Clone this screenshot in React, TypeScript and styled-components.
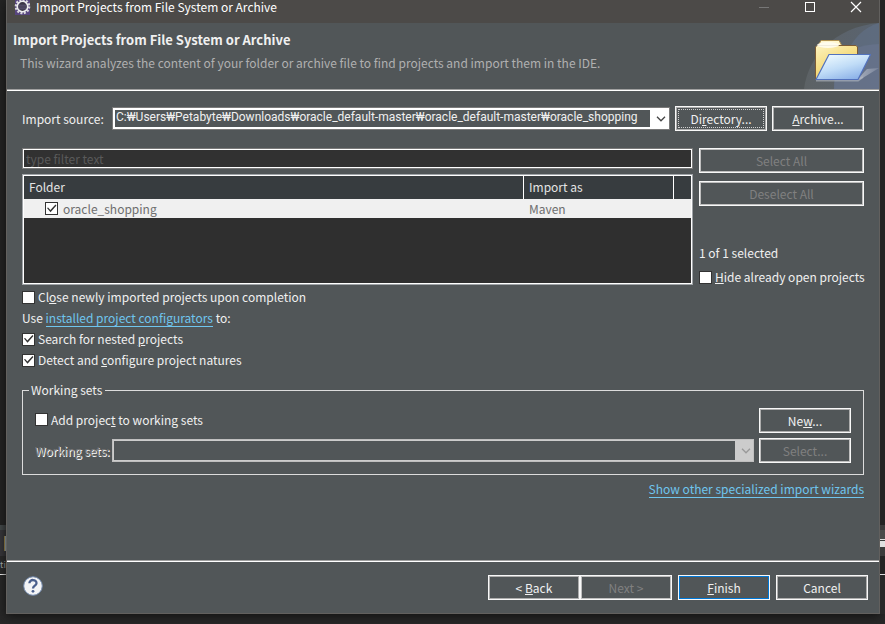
import React from "react";
import styled, { createGlobalStyle, css } from "styled-components";

const panel = "#515658";
const textColor = "#f0f0f0";
const disabledText = "#808080";

const Global = createGlobalStyle`
  *, *::before, *::after { box-sizing: border-box; }
  body {
    margin: 0;
    background: #282828;
    color: ${textColor};
    font: 400 12px/16px "Noto Sans CJK KR", "Noto Sans", sans-serif;
  }
  button, input, select { font: inherit; color: inherit; margin: 0; }
`;

const Desktop = styled.div`
  display: grid;
  grid-template-columns: 6px minmax(0, 1fr) 5px;
  min-height: 100vh;
  padding-bottom: 10px;
`;

const Strip = styled.div`
  display: flex;
  flex-direction: column;
  justify-content: flex-end;
  overflow: hidden;
  background: #242424;
`;

const Band = styled.div<{ $h: number; $bg: string }>`
  display: flex;
  flex: none;
  align-items: center;
  justify-content: flex-start;
  height: ${(p) => p.$h}px;
  background: ${(p) => p.$bg};
  color: #b8b8b8;
  font-size: 9px;
`;

const Chip = styled.span`
  width: 2px;
  height: 15px;
  margin-left: auto;
  background: #b5ccd4;
  border-left: 1px solid #b39a55;
`;

const Dialog = styled.section`
  display: flex;
  flex-direction: column;
  background: ${panel};
  border: solid #62605e;
  border-width: 0 1px 1px;
  box-shadow: 0 2px 10px #111;
`;

const TitleBar = styled.header`
  display: flex;
  align-items: center;
  height: 23px;
  padding: 0 15px 9px 7px;
  gap: 5px;
  background: #4c4a48;
`;

const WindowTitle = styled.span`
  flex: 1;
  color: #fff;
`;

const WindowButtons = styled.div`
  display: flex;
  gap: 30px;
`;

const WindowButton = styled.button`
  display: flex;
  width: 16px;
  height: 14px;
  padding: 0;
  border: 0;
  background: none;
`;

const Banner = styled.div`
  display: flex;
  justify-content: space-between;
  height: 68px;
  border-bottom: 1px solid #fff;
  box-shadow: inset 0 -1px #a0a0a0;
`;

const BannerText = styled.div`
  padding: 9px 0 0 6px;
`;

const Heading = styled.h1`
  margin: 0;
  font-size: 13px;
  line-height: 16px;
  font-weight: 700;
`;

const Description = styled.p`
  margin: 7px 0 0 7px;
  color: #b0b0b0;
`;

const Body = styled.main`
  flex: 1;
  padding: 15px 15px 0;
`;

const Button = styled.button<{ $kind?: "focus" | "primary" }>`
  width: 92px;
  height: 25px;
  padding: 0;
  border: 1px solid #f8f8f8;
  background: ${panel};
  box-shadow: inset 0 0 0 1px #adadad;
  &:disabled {
    color: ${disabledText};
    box-shadow: inset 0 0 0 1px #bfbfbf;
  }
  ${(p) =>
    p.$kind === "primary" &&
    css`
      box-shadow: inset 0 0 0 1px #0078d7;
    `}
  ${(p) =>
    p.$kind === "focus" &&
    css`
      outline: 1px dotted #d0d0d0;
      outline-offset: -4px;
    `}
`;

const WideButton = styled(Button)`
  width: 100%;
`;

const SourceRow = styled.div`
  display: grid;
  grid-template-columns: 85px minmax(0, 1fr) auto auto;
  column-gap: 5px;
  align-items: center;
`;

const Combo = styled.div<{ $off?: boolean }>`
  display: grid;
  grid-template-columns: minmax(0, 1fr) 12px;
  height: 23px;
  border: 1px solid ${(p) => (p.$off ? "#bfbfbf" : "#7a7a7a")};
  background: ${(p) => (p.$off ? "#ccc" : "#fff")};
  padding: ${(p) => (p.$off ? 1 : 2)}px;
  color: ${(p) => (p.$off ? "#999" : "#444")};
  svg {
    grid-area: 1 / 2;
    place-self: center;
    pointer-events: none;
  }
`;

const Select = styled.select`
  grid-area: 1 / 1 / 2 / 3;
  appearance: none;
  min-width: 0;
  border: 0;
  border-radius: 0;
  margin-right: 17px;
  padding: 0 0 2px 1px;
  background: ${panel};
  color: ${textColor};
  font-family: Roboto, "Noto Sans CJK KR", sans-serif;
  line-height: 15px;
  outline: none;
  opacity: 1;
`;

const Projects = styled.div`
  display: grid;
  grid-template-columns: minmax(0, 1fr) 165px;
  column-gap: 6px;
  margin-top: 17px;
`;

const ListColumn = styled.div`
  display: flex;
  flex-direction: column;
  gap: 5px;
`;

const Filter = styled.input`
  width: 100%;
  height: 21px;
  padding: 0 2px 1px 3px;
  border: 1px solid #7a7a7a;
  box-shadow: inset 0 0 0 1px #fff;
  background: #313131;
  outline: none;
  &::placeholder {
    color: #5a5a5a;
    opacity: 1;
  }
`;

const TableFrame = styled.div`
  height: 111px;
  border: 1px solid #a0a4a8;
  box-shadow: inset 0 0 0 1px #fff;
  padding: 1px;
  background: #2f2f2f;
`;

const Table = styled.table`
  width: 100%;
  table-layout: fixed;
  border-collapse: separate;
  border-spacing: 0;
`;

const Th = styled.th<{ $w?: number }>`
  width: ${(p) => (p.$w ? `${p.$w}px` : "auto")};
  height: 23px;
  padding: 0 5px 1px;
  text-align: left;
  font-weight: 400;
  color: #e4e4e4;
  background: #373c3f;
  border-right: 1px solid #fff;
  &:last-child {
    border-right: 0;
  }
`;

const Td = styled.td`
  height: 19px;
  padding: 0 5px;
  color: #6e6e6e;
  background: #f0f0f0;
`;

const Side = styled.div`
  display: flex;
  flex-direction: column;
  align-items: stretch;
  gap: 8px;
`;

const Status = styled.div`
  margin-top: 31px;
`;

const Check = styled.label<{ $indent?: number; $gap?: number }>`
  display: flex;
  align-items: center;
  gap: ${(p) => p.$gap || 3}px;
  padding-left: ${(p) => p.$indent || 0}px;
  white-space: nowrap;
`;

const Box = styled.input`
  appearance: none;
  flex: none;
  width: 13px;
  height: 13px;
  border: 1px solid #333;
  background: #fff;
  &:checked::before {
    content: "";
    display: block;
    width: 11px;
    height: 11px;
    background: #333;
    clip-path: polygon(9% 46%, 19% 40%, 40% 64%, 86% 14%, 95% 23%, 41% 83%);
  }
`;

const Options = styled.div`
  display: flex;
  flex-direction: column;
  gap: 5px;
  margin-top: 4px;
`;

const Link = styled.a`
  color: #6fc5ee;
  text-decoration: none;
  border-bottom: 1px solid #6fc5ee;
`;

const Group = styled.fieldset`
  margin: 14px 0 0;
  padding: 10px 12px 11px;
  border: 1px solid #dcdcdc;
  min-width: 0;
`;

const Legend = styled.legend`
  margin-left: -6px;
  padding: 0 3px 0 2px;
`;

const GroupGrid = styled.div`
  display: grid;
  grid-template-columns: 72px minmax(0, 1fr) auto;
  gap: 5px;
  align-items: center;
`;

const SpanTwo = styled.div`
  grid-column: span 2;
  padding-bottom: 2px;
`;

const EmbossedLabel = styled.label`
  color: #777;
  text-shadow: 1px 1px 0 #fff;
  white-space: nowrap;
`;

const MoreLink = styled.div`
  margin-top: 6px;
  text-align: right;
`;

const Footer = styled.footer`
  display: flex;
  align-items: flex-start;
  justify-content: space-between;
  height: 52px;
  padding: 13px 11px 0 16px;
  border-top: 1px solid #fff;
  box-shadow: 0 -1px #a0a0a0;
`;

const Actions = styled.div`
  display: flex;
  gap: 6px;
`;

const Pair = styled.div`
  display: flex;
`;

const HelpButton = styled.button`
  display: flex;
  padding: 1px 0 0;
  border: 0;
  background: none;
`;

function Chevron() {
  return (
    <svg width="10" height="6" viewBox="0 0 10 6" fill="none" stroke="currentColor" strokeWidth="1.3">
      <path d="M1 .8 5 4.8 9 .8" />
    </svg>
  );
}

function GearLogo() {
  return (
    <svg width="17" height="17" viewBox="0 0 17 17">
      <rect x="1" y="0" width="15" height="16" fill="#57457f" />
      <circle cx="8.5" cy="7.5" r="6.6" fill="none" stroke="#d8d6dc" strokeWidth="2.4" strokeDasharray="2 1.456" />
      <circle cx="8.5" cy="7.5" r="5.2" fill="#3b3546" stroke="#eeedf0" strokeWidth="1.6" />
      <path d="M4.5 6.2h8M4.2 8h8.6M4.8 9.8h7.4" stroke="#5c5475" />
    </svg>
  );
}

function FolderArt() {
  return (
    <svg width="76" height="67" viewBox="0 0 76 67">
      <defs>
        <linearGradient id="fade" x1="0" x2="1">
          <stop offset="0" stopColor="#6e7478" />
          <stop offset="1" stopColor="#667794" />
        </linearGradient>
        <linearGradient id="back" x1="0" y1="0" x2=".6" y2="1">
          <stop offset="0" stopColor="#fdf3c0" />
          <stop offset=".5" stopColor="#f6df88" />
          <stop offset="1" stopColor="#eccb5c" />
        </linearGradient>
        <linearGradient id="front" x1=".2" y1="0" x2=".8" y2="1">
          <stop offset="0" stopColor="#eefaff" />
          <stop offset=".5" stopColor="#c0dcf7" />
          <stop offset="1" stopColor="#86ade6" />
        </linearGradient>
        <linearGradient id="shade" x1="0" x2="1">
          <stop offset="0" stopColor="#d5d9e0" />
          <stop offset="1" stopColor="#8690a5" />
        </linearGradient>
      </defs>
      <path d="M1 66C5 34 31 4 76 0V66Z" fill="url(#fade)" opacity=".4" />
      <path d="M42 34C49 16 61 4 76 0V66H31C31 52 35 43 42 34Z" fill="#637590" opacity=".45" />
      <path d="M48 27C57 23 67 21 76 21V66H31C31 48 37 34 48 27Z" fill="#6b7894" opacity=".5" />
      <path d="M54 57 64 46 76 45 58 56Z" fill="url(#shade)" opacity=".6" />
      <path d="M13 57.500H55L60 54" fill="none" stroke="#b4bac4" strokeWidth="2" opacity=".6" />
      <path d="M15 23 18 17.500H36L39 23Z" fill="#fff7cf" stroke="#b29453" />
      <path d="M12.500 24 14 22.500H53L54.500 24V56H12.500Z" fill="url(#back)" stroke="#7c5b35" />
      <ellipse cx="25" cy="22" rx="11" ry="3" fill="#fffdf0" opacity=".9" />
      <path d="M26 31.500H67.500L55 56.500H13Z" fill="url(#front)" stroke="#5272bd" strokeWidth="1.200" strokeLinejoin="round" />
    </svg>
  );
}

function HelpIcon() {
  return (
    <svg width="20" height="20" viewBox="0 0 20 20">
      <circle cx="10" cy="10" r="9.300" fill="#f3f4f6" stroke="#6f86aa" />
      <path d="M6.400 7.300C6.400 2.800 13.700 3.100 13.500 7.200 13.400 9.700 10 9.600 10 12.500" fill="none" stroke="#4a5f8d" strokeWidth="2.300" />
      <circle cx="10" cy="15.300" r="1.400" fill="#4a5f8d" />
    </svg>
  );
}

export default function App() {
  return (
    <>
      <Global />
      <Desktop>
        <Strip>
          <Band $h={5} $bg="#454b4c" />
          <Band $h={6} $bg="#39383c" />
          <Band $h={15} $bg="#39383c"><Chip /></Band>
          <Band $h={5} $bg="#39383c" />
          <Band $h={18} $bg="#2b2b2b">ti</Band>
          <Band $h={1} $bg="#fff" />
          <Band $h={39} $bg="#282828" />
        </Strip>
        <Dialog aria-label="Import Projects from File System or Archive">
          <TitleBar>
            <GearLogo />
            <WindowTitle>Import Projects from File System or Archive</WindowTitle>
            <WindowButtons>
              <WindowButton aria-label="Minimize" disabled>
                <svg width="16" height="14"><path d="M3 7.500H13" stroke="#777" /></svg>
              </WindowButton>
              <WindowButton aria-label="Maximize">
                <svg width="16" height="14"><rect x="3.500" y="2.500" width="9" height="9" fill="none" stroke="#fff" /></svg>
              </WindowButton>
              <WindowButton aria-label="Close">
                <svg width="16" height="14"><path d="M3 2 13 12M13 2 3 12" stroke="#fff" strokeWidth="1.200" /></svg>
              </WindowButton>
            </WindowButtons>
          </TitleBar>
          <Banner>
            <BannerText>
              <Heading>Import Projects from File System or Archive</Heading>
              <Description>
                This wizard analyzes the content of your folder or archive file to find projects and import them in the IDE.
              </Description>
            </BannerText>
            <FolderArt />
          </Banner>

          <Body>
            <SourceRow>
              <label htmlFor="source">Import source:</label>
              <Combo>
                <Select id="source">
                  <option>C:₩Users₩Petabyte₩Downloads₩oracle_default-master₩oracle_default-master₩oracle_shopping</option>
                </Select>
                <Chevron />
              </Combo>
              <Button $kind="focus">Di<u>r</u>ectory...</Button>
              <Button><u>A</u>rchive...</Button>
            </SourceRow>

            <Projects>
              <ListColumn>
                <Filter placeholder="type filter text" aria-label="type filter text" />
                <TableFrame>
                  <Table>
                    <thead>
                      <tr>
                        <Th>Folder</Th>
                        <Th $w={150}>Import as</Th>
                        <Th $w={17} aria-label="Spacer" />
                      </tr>
                    </thead>
                    <tbody>
                      <tr>
                        <Td>
                          <Check $indent={16} $gap={5}>
                            <Box type="checkbox" defaultChecked />
                            oracle_shopping
                          </Check>
                        </Td>
                        <Td>Maven</Td>
                        <Td />
                      </tr>
                    </tbody>
                  </Table>
                </TableFrame>
              </ListColumn>
              <Side>
                <WideButton disabled>Select All</WideButton>
                <WideButton disabled>Deselect All</WideButton>
                <Status>1 of 1 selected</Status>
                <Check>
                  <Box type="checkbox" />
                  <span><u>H</u>ide already open projects</span>
                </Check>
              </Side>
            </Projects>

            <Options>
              <Check>
                <Box type="checkbox" />
                <span>Cl<u>o</u>se newly imported projects upon completion</span>
              </Check>
              <div>Use <Link href="#configurators">installed project configurators</Link> to:</div>
              <Check>
                <Box type="checkbox" defaultChecked />
                <span>Search for nested <u>p</u>rojects</span>
              </Check>
              <Check>
                <Box type="checkbox" defaultChecked />
                <span>Detect and <u>c</u>onfigure project natures</span>
              </Check>
            </Options>

            <Group>
              <Legend>Working sets</Legend>
              <GroupGrid>
                <SpanTwo>
                  <Check>
                    <Box type="checkbox" />
                    <span>Add projec<u>t</u> to working sets</span>
                  </Check>
                </SpanTwo>
                <Button>Ne<u>w</u>...</Button>
                <EmbossedLabel htmlFor="sets">Working sets:</EmbossedLabel>
                <Combo $off>
                  <Select id="sets" disabled />
                  <Chevron />
                </Combo>
                <Button disabled>Select...</Button>
              </GroupGrid>
            </Group>
            <MoreLink>
              <Link href="#wizards">Show other specialized import wizards</Link>
            </MoreLink>
          </Body>

          <Footer>
            <HelpButton aria-label="Help"><HelpIcon /></HelpButton>
            <Actions>
              <Pair>
                <Button>&lt; <u>B</u>ack</Button>
                <Button disabled>Next &gt;</Button>
              </Pair>
              <Button $kind="primary"><u>F</u>inish</Button>
              <Button>Cancel</Button>
            </Actions>
          </Footer>
        </Dialog>
        <Strip>
          <Band $h={5} $bg="#3c3c3c" />
          <Band $h={9} $bg="#4a4a4a" />
          <Band $h={1} $bg="#ddd" />
          <Band $h={1} $bg="#3c3c3c" />
          <Band $h={6} $bg="#e0e0e0" />
          <Band $h={9} $bg="#3c3c3c" />
          <Band $h={18} $bg="#242424" />
          <Band $h={1} $bg="#ddd" />
          <Band $h={39} $bg="#282828" />
        </Strip>
      </Desktop>
    </>
  );
}
